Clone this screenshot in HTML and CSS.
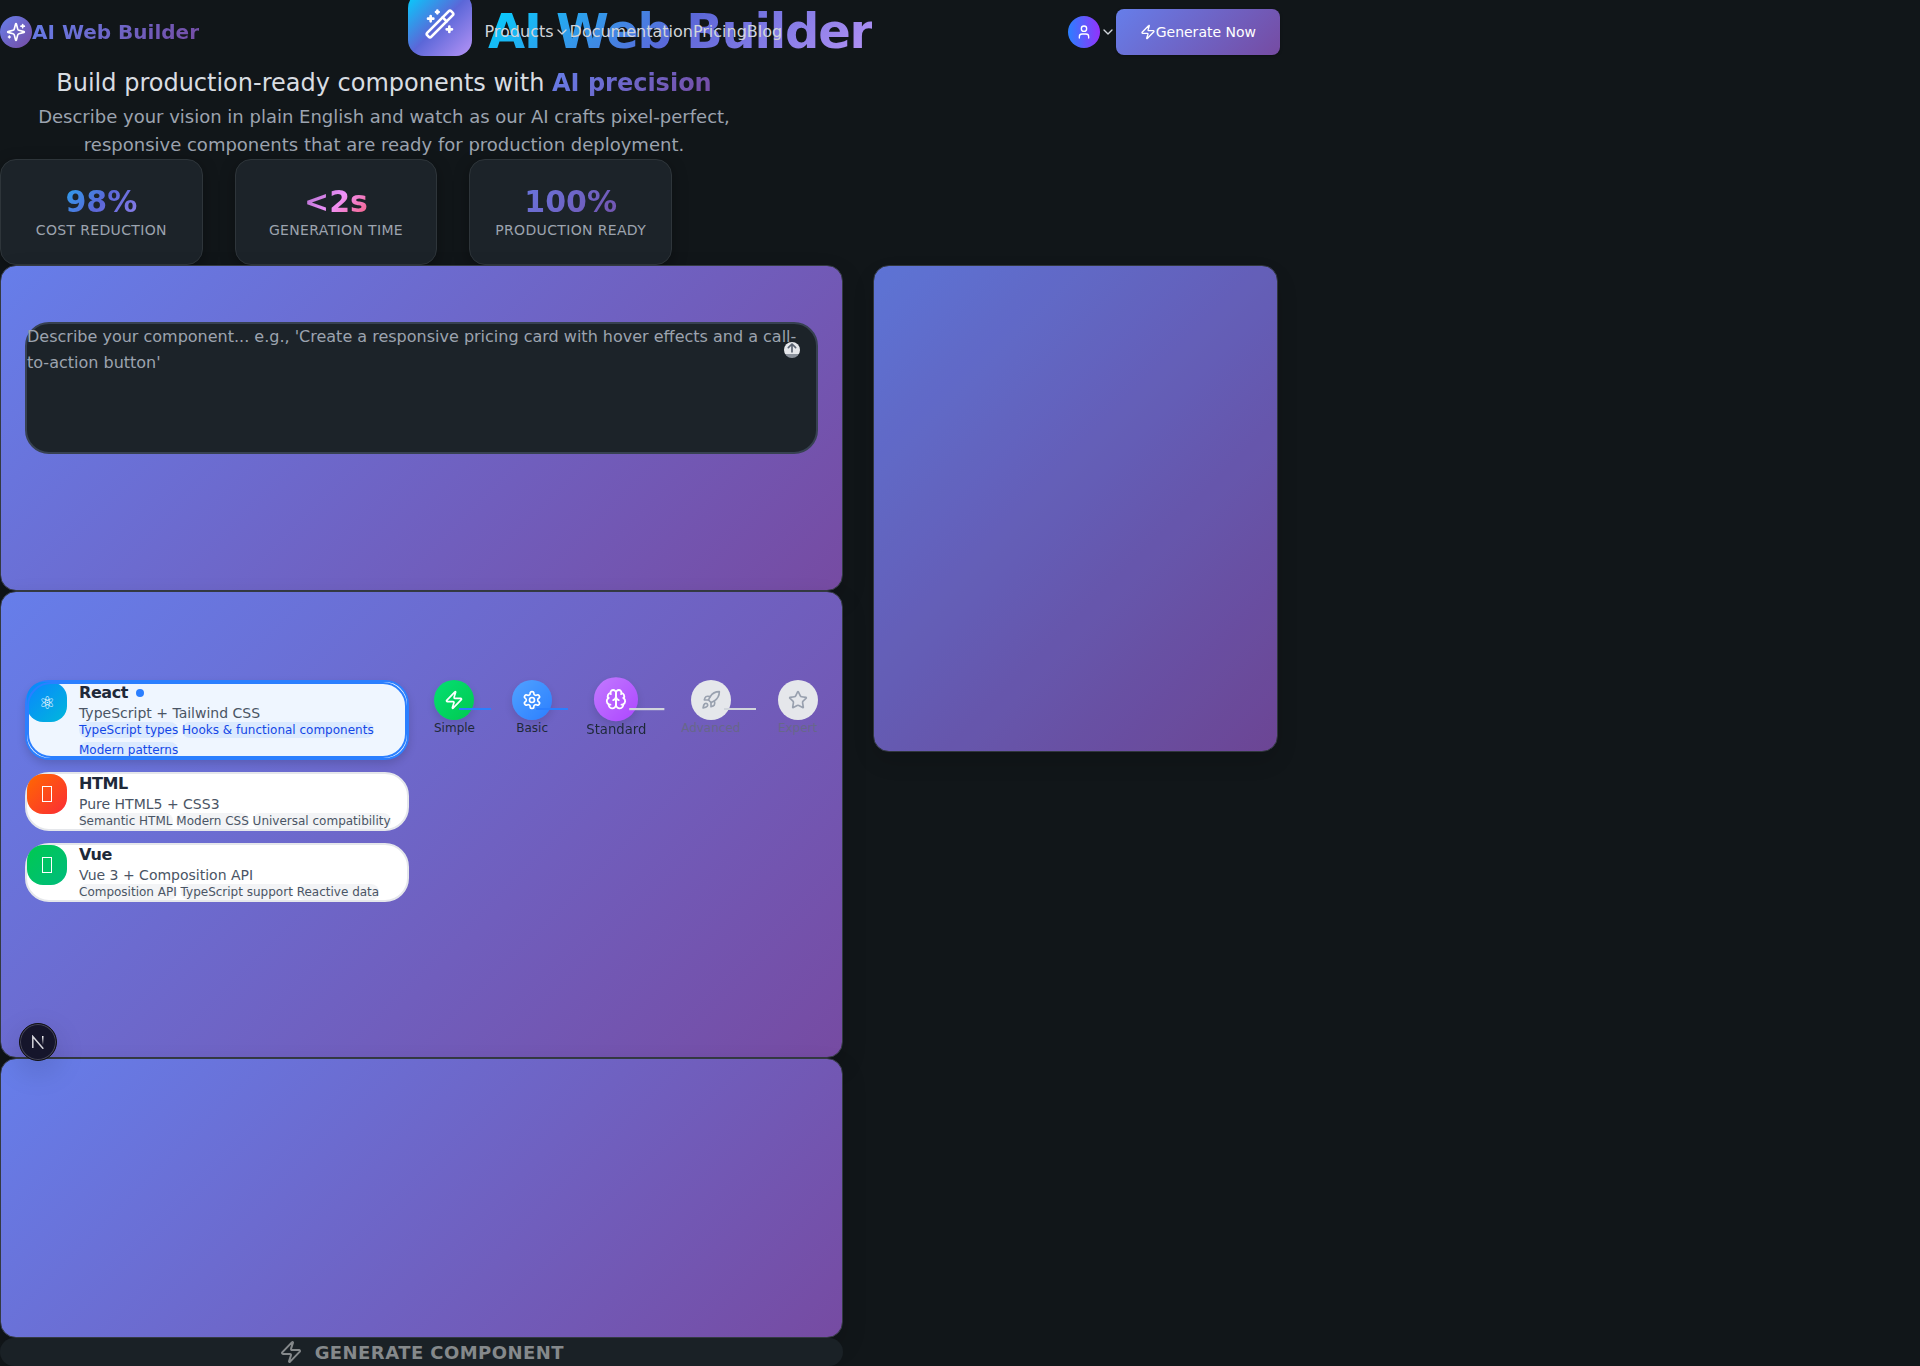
FILE: index.html
```html
<!DOCTYPE html>
<html lang="en">
<head>
<meta charset="utf-8">
<title>AI Web Builder</title>
<link rel="stylesheet" href="styles.css">
</head>
<body>
<header class="topbar">
  <div class="brand">
    <span class="brand-mark"><svg class="icon" width="20" height="20" viewBox="0 0 24 24"><path d="M9.937 15.5A2 2 0 0 0 8.5 14.063l-6.135-1.582a.5.5 0 0 1 0-.962L8.5 9.936A2 2 0 0 0 9.937 8.5l1.582-6.135a.5.5 0 0 1 .963 0L14.063 8.5A2 2 0 0 0 15.5 9.937l6.135 1.581a.5.5 0 0 1 0 .964L15.5 14.063a2 2 0 0 0-1.437 1.437l-1.582 6.135a.5.5 0 0 1-.963 0z"/><path d="M20 3v4M22 5h-4M4 17v2M5 18H3"/></svg></span>
    <span class="brand-name">AI Web Builder</span>
  </div>
  <nav class="nav">
    <a class="nav-link">Products<svg class="icon" width="16" height="16" viewBox="0 0 24 24"><path d="m6 9 6 6 6-6"/></svg></a>
    <a class="nav-link">Documentation</a>
    <a class="nav-link">Pricing</a>
    <a class="nav-link">Blog</a>
  </nav>
  <div class="actions">
    <span class="avatar"><svg class="icon" width="16" height="16" viewBox="0 0 24 24"><path d="M19 21v-2a4 4 0 0 0-4-4H9a4 4 0 0 0-4 4v2"/><circle cx="12" cy="7" r="4"/></svg></span>
    <svg class="icon" width="16" height="16" viewBox="0 0 24 24"><path d="m6 9 6 6 6-6"/></svg>
    <button class="cta"><svg class="icon" width="16" height="16" viewBox="0 0 24 24"><path d="M4 14a1 1 0 0 1-.78-1.63l9.9-10.2a.5.5 0 0 1 .86.46l-1.92 6.02A1 1 0 0 0 13 10h7a1 1 0 0 1 .78 1.63l-9.9 10.2a.5.5 0 0 1-.86-.46l1.92-6.02A1 1 0 0 0 11 14z"/></svg>Generate Now</button>
  </div>
</header>
<main class="page">
  <section class="hero">
    <div class="hero-head">
      <span class="hero-mark"><svg class="icon" width="32" height="32" viewBox="0 0 24 24"><path d="m21.64 3.64-1.28-1.28a1.21 1.21 0 0 0-1.72 0L2.36 18.64a1.21 1.21 0 0 0 0 1.72l1.28 1.28a1.2 1.2 0 0 0 1.72 0L21.64 5.36a1.2 1.2 0 0 0 0-1.72"/><path d="m14 7 3 3M5 6v4M19 14v4M10 2v2M7 8H3M21 16h-4M11 3H9"/></svg></span>
      <h1 class="hero-title">AI Web Builder</h1>
    </div>
    <p class="hero-sub">Build production-ready components with <strong class="brand-text">AI precision</strong></p>
    <p class="hero-desc">Describe your vision in plain English and watch as our AI crafts pixel-perfect, responsive components that are ready for production deployment.</p>
    <div class="stats">
      <div class="stat"><div class="stat-value cool">98%</div><div class="stat-label">Cost Reduction</div></div>
      <div class="stat"><div class="stat-value warm">&lt;2s</div><div class="stat-label">Generation Time</div></div>
      <div class="stat"><div class="stat-value brandy">100%</div><div class="stat-label">Production Ready</div></div>
    </div>
  </section>
  <div class="workspace">
    <div class="builder">
      <section class="panel panel-prompt">
        <div class="prompt">Describe your component... e.g., 'Create a responsive pricing card with hover effects and a call-to-action button'
          <span class="upload"><svg class="icon" width="16" height="16" viewBox="0 0 24 24"><path d="M12 15V3M6.500 8.500 12 3 17.500 8.500"/></svg></span>
        </div>
      </section>
      <section class="panel panel-options">
        <div class="frameworks">
          <article class="fw selected">
            <span class="fw-icon react">⚛</span>
            <div class="fw-body">
              <h3 class="fw-name">React<i class="dot"></i></h3>
              <p class="fw-sub">TypeScript + Tailwind CSS</p>
              <div class="tags"><span>TypeScript types</span> <span>Hooks &amp; functional components</span> <span>Modern patterns</span></div>
            </div>
          </article>
          <article class="fw">
            <span class="fw-icon html"><i class="tofu"></i></span>
            <div class="fw-body">
              <h3 class="fw-name">HTML</h3>
              <p class="fw-sub">Pure HTML5 + CSS3</p>
              <div class="tags"><span>Semantic HTML</span> <span>Modern CSS</span> <span>Universal compatibility</span></div>
            </div>
          </article>
          <article class="fw">
            <span class="fw-icon vue"><i class="tofu"></i></span>
            <div class="fw-body">
              <h3 class="fw-name">Vue</h3>
              <p class="fw-sub">Vue 3 + Composition API</p>
              <div class="tags"><span>Composition API</span> <span>TypeScript support</span> <span>Reactive data</span></div>
            </div>
          </article>
        </div>
        <div class="steps">
          <div class="step done"><span class="step-dot green"><svg class="icon" width="20" height="20" viewBox="0 0 24 24"><path d="M4 14a1 1 0 0 1-.78-1.63l9.9-10.2a.5.5 0 0 1 .86.46l-1.92 6.02A1 1 0 0 0 13 10h7a1 1 0 0 1 .78 1.63l-9.9 10.2a.5.5 0 0 1-.86-.46l1.92-6.02A1 1 0 0 0 11 14z"/></svg></span><span class="step-label">Simple</span></div>
          <div class="step done"><span class="step-dot blue"><svg class="icon" width="20" height="20" viewBox="0 0 24 24"><path d="M12.220 2h-.44a2 2 0 0 0-2 2v.18a2 2 0 0 1-1 1.730l-.43.25a2 2 0 0 1-2 0l-.15-.08a2 2 0 0 0-2.730.73l-.22.38a2 2 0 0 0 .73 2.730l.15.1a2 2 0 0 1 1 1.720v.51a2 2 0 0 1-1 1.740l-.15.09a2 2 0 0 0-.73 2.730l.22.38a2 2 0 0 0 2.730.73l.15-.08a2 2 0 0 1 2 0l.43.25a2 2 0 0 1 1 1.730V20a2 2 0 0 0 2 2h.44a2 2 0 0 0 2-2v-.18a2 2 0 0 1 1-1.730l.43-.25a2 2 0 0 1 2 0l.15.08a2 2 0 0 0 2.730-.73l.22-.39a2 2 0 0 0-.73-2.730l-.15-.08a2 2 0 0 1-1-1.740v-.5a2 2 0 0 1 1-1.740l.15-.09a2 2 0 0 0 .73-2.730l-.22-.38a2 2 0 0 0-2.730-.73l-.15.08a2 2 0 0 1-2 0l-.43-.25a2 2 0 0 1-1-1.730V4a2 2 0 0 0-2-2z"/><circle cx="12" cy="12" r="3"/></svg></span><span class="step-label">Basic</span></div>
          <div class="step current"><span class="step-dot violet"><svg class="icon" width="20" height="20" viewBox="0 0 24 24"><path d="M12 5a3 3 0 1 0-5.997.125 4 4 0 0 0-2.526 5.770 4 4 0 0 0 .556 6.588A4 4 0 1 0 12 18Z"/><path d="M12 5a3 3 0 1 1 5.997.125 4 4 0 0 1 2.526 5.770 4 4 0 0 1-.556 6.588A4 4 0 1 1 12 18Z"/><path d="M15 13a4.500 4.500 0 0 1-3-4 4.500 4.500 0 0 1-3 4M17.599 6.500a3 3 0 0 0 .399-1.375M6.003 5.125A3 3 0 0 0 6.401 6.500M3.477 10.896a4 4 0 0 1 .585-.396M19.938 10.500a4 4 0 0 1 .585.396M6 18a4 4 0 0 1-1.967-.516M19.967 17.484A4 4 0 0 1 18 18"/></svg></span><span class="step-label">Standard</span></div>
          <div class="step locked"><span class="step-dot"><svg class="icon" width="20" height="20" viewBox="0 0 24 24"><path d="M4.500 16.500c-1.500 1.260-2 5-2 5s3.740-.5 5-2c.71-.84.7-2.130-.09-2.910a2.180 2.180 0 0 0-2.910-.09zM12 15l-3-3a22 22 0 0 1 2-3.950A12.880 12.880 0 0 1 22 2c0 2.720-.78 7.500-6 11a22.350 22.350 0 0 1-4 2z"/><path d="M9 12H4s.55-3.030 2-4c1.620-1.080 5 0 5 0M12 15v5s3.030-.55 4-2c1.080-1.620 0-5 0-5"/></svg></span><span class="step-label">Advanced</span></div>
          <div class="step locked"><span class="step-dot"><svg class="icon" width="20" height="20" viewBox="0 0 24 24"><path d="M11.525 2.295a.53.53 0 0 1 .95 0l2.310 4.679a2.123 2.123 0 0 0 1.595 1.160l5.166.756a.53.53 0 0 1 .294.904l-3.736 3.638a2.123 2.123 0 0 0-.611 1.878l.882 5.140a.53.53 0 0 1-.771.560l-4.618-2.428a2.122 2.122 0 0 0-1.973 0L6.396 21.010a.53.53 0 0 1-.770-.560l.881-5.139a2.122 2.122 0 0 0-.611-1.879L2.160 9.795a.53.53 0 0 1 .294-.906l5.165-.755a2.122 2.122 0 0 0 1.597-1.160z"/></svg></span><span class="step-label">Expert</span></div>
        </div>
      </section>
      <section class="panel panel-extra"></section>
      <button class="generate"><svg class="icon" width="24" height="24" viewBox="0 0 24 24"><path d="M4 14a1 1 0 0 1-.78-1.63l9.9-10.2a.5.5 0 0 1 .86.46l-1.92 6.02A1 1 0 0 0 13 10h7a1 1 0 0 1 .78 1.63l-9.9 10.2a.5.5 0 0 1-.86-.46l1.92-6.02A1 1 0 0 0 11 14z"/></svg>Generate Component</button>
    </div>
    <aside class="panel preview"></aside>
  </div>
</main>
<div class="dev-badge"><svg width="14" height="14" viewBox="0 0 14 14"><defs><linearGradient id="n1" x1="0" y1="0" x2="0" y2="1"><stop offset="0" stop-color="#fff"/><stop offset="1" stop-color="#fff" stop-opacity="0"/></linearGradient></defs><path d="M1.800 13V1.500L12.300 13.800" fill="none" stroke="#d4d4da" stroke-width="1.500"/><rect x="11" y="1" width="1.500" height="9" fill="url(#n1)"/></svg></div>
</body>
</html>
```
FILE: styles.css
```css
* { box-sizing: border-box; margin: 0; padding: 0; }
html, body { height: 1366px; overflow: hidden; }
body { position: relative; background: #111619; color: #d1d5db; font: 16px/1.5 "DejaVu Sans", sans-serif; }
button { border: 0; font: inherit; }
.icon { display: block; flex: none; fill: none; stroke: currentColor; stroke-width: 2; stroke-linecap: round; stroke-linejoin: round; }

.topbar { position: absolute; top: 0; left: 0; z-index: 10; width: 1280px; height: 64px; display: flex; align-items: center; justify-content: space-between; }
.brand, .nav, .nav-link, .actions { display: flex; align-items: center; }
.brand-mark, .avatar { width: 32px; height: 32px; border-radius: 50%; display: flex; align-items: center; justify-content: center; color: #fff; background: linear-gradient(135deg, #667eea, #764ba2); }
.avatar { background: linear-gradient(90deg, #2b7fff, #9333fb); }
.brand-name, .brand-text { color: transparent; background: linear-gradient(135deg, #667eea, #764ba2); -webkit-background-clip: text; background-clip: text; }
.brand-name { font-size: 20px; font-weight: 700; line-height: 28px; }
.nav-link { color: #d1d5db; }
.cta { display: flex; align-items: center; height: 46px; padding: 0 24px; border-radius: 8px; color: #fff; font-size: 14px; background: linear-gradient(135deg, #667eea, #764ba2); box-shadow: 0 1px 3px rgba(0,0,0,.3); }

.page { width: 1280px; }
.hero { height: 265px; }
.hero-head { display: flex; align-items: center; justify-content: center; gap: 16px; height: 62px; }
.hero-mark { width: 64px; height: 64px; margin-top: -14px; border-radius: 16px; display: flex; align-items: center; justify-content: center; color: #fff; background: linear-gradient(135deg, #00d4ff, #5b67d8 50%, #b794f6); }
.hero-title { font-size: 48px; line-height: 62px; letter-spacing: -1.200px; color: transparent; background: linear-gradient(135deg, #00d4ff, #5b67d8 50%, #b794f6); -webkit-background-clip: text; background-clip: text; }
.hero-sub { width: 768px; height: 41px; font-size: 24px; line-height: 43px; text-align: center; color: #d9dde2; }
.hero-desc { width: 768px; height: 56px; padding: 0 32px; font-size: 18px; line-height: 28px; text-align: center; color: #9ca3af; }
.stats { width: 672px; display: grid; grid-template-columns: repeat(3, 1fr); gap: 32px; }
.stat { height: 106px; padding-top: 22px; border: 1px solid #2e353a; border-radius: 16px; background: #1c2329; text-align: center; box-shadow: 0 4px 16px rgba(0,0,0,.3); }
.stat-value { margin: 0 24px -1px; font-size: 30px; line-height: 40px; font-weight: 700; color: transparent; -webkit-background-clip: text; background-clip: text; }
.cool { background-image: linear-gradient(135deg, #00d4ff, #5b67d8 50%, #b794f6); }
.warm { background-image: linear-gradient(135deg, #764ba2 10%, #f093fb 50%, #f5576c 78%); }
.brandy { background-image: linear-gradient(135deg, #667eea, #764ba2); }
.stat-label { font-size: 14px; line-height: 18px; text-transform: uppercase; letter-spacing: .35px; color: #9ca3af; white-space: nowrap; }

.workspace { display: grid; grid-template-columns: 842.670px 404.500px; gap: 30.600px; align-items: start; }
.panel { border: 1px solid #343a42; border-radius: 16px; background: linear-gradient(135deg, #667eea, #764ba2); box-shadow: 0 10px 24px rgba(0,0,0,.15); padding: 0 24px; }
.panel-prompt { height: 326px; padding-top: 56px; }
.prompt { position: relative; height: 132px; border: 2px solid #374151; border-radius: 24px; background: #1c2329; color: #9ca3af; line-height: 26px; }
.upload { position: absolute; top: 18px; right: 16px; width: 16px; height: 16px; border-radius: 50%; background: linear-gradient(#e5e7eb 78%, #8b929c 78%); color: #5b6472; }
.upload .icon { stroke-width: 2.500; }
.panel-options { height: 467px; padding-top: 88px; display: grid; grid-template-columns: 384px 383.670px; gap: 25px; align-items: start; }
.frameworks { display: grid; gap: 12px; }
.fw { position: relative; display: flex; gap: 12px; border: 2px solid #e5e7eb; border-radius: 24px; background: #fff; }
.fw.selected { border-color: #2b7fff; background: #eff6ff; box-shadow: 0 4px 8px rgba(0,0,0,.15); }
.fw.selected::after { content: ""; position: absolute; inset: 0; border: 2px solid #2b7fff; border-radius: 24px; }
.fw-icon { flex: none; width: 40px; height: 40px; border-radius: 16px; display: flex; align-items: center; justify-content: center; color: #fff; font-size: 18px; }
.react { background: linear-gradient(135deg, #0a84ff, #00b8db); }
.html { background: linear-gradient(135deg, #ff6900, #fb2c36); }
.vue { background: linear-gradient(135deg, #00c950, #00bc7d); }
.tofu { width: 10px; height: 16px; border: 1px solid #fff; }
.fw-name { display: flex; align-items: center; gap: 8px; font-size: 16px; line-height: 20px; letter-spacing: -.400px; color: #1e2939; }
.selected .fw-name { line-height: 21px; }
.dot { width: 8px; height: 8px; border-radius: 50%; background: #2b7fff; }
.fw-sub { font-size: 14px; line-height: 20px; color: #4a5565; }
.tags { margin: -2.600px 0 -2.400px; font-size: 12px; line-height: 20px; color: #4a5565; }
.tags span { border-radius: 8px; background: #f3f4f6; padding: 1px 0; }
.selected .tags { color: #1447e6; }
.selected .tags span { background: #dbeafe; }

.steps { display: flex; justify-content: space-between; }
.step { position: relative; display: flex; flex-direction: column; align-items: center; color: #1e2939; }
.step-dot { width: 40px; height: 40px; border-radius: 50%; display: flex; align-items: center; justify-content: center; color: #fff; box-shadow: 0 4px 8px rgba(0,0,0,.12); }
.green { background: linear-gradient(135deg, #05df72, #00c950); }
.blue { background: linear-gradient(135deg, #51a2ff, #2b7fff); }
.violet { background: linear-gradient(135deg, #c27aff, #ad46ff); }
.step-label { font-size: 12px; line-height: 16px; }
.step:not(:last-child)::after { content: ""; position: absolute; top: 28px; left: calc(100% - 16px); width: 32px; height: 2px; background: #d1d5dc; }
.step.done::after { background: #2b7fff; }
.current { transform: scale(1.1); }
.locked .step-dot { background: #e5e7eb; color: #99a1af; box-shadow: none; }
.locked .step-label { color: #67678a; }

.panel-extra { height: 280px; }
.generate { width: 100%; height: 28px; display: flex; align-items: center; justify-content: center; gap: 12px; border-radius: 16px; background: #1a2126; color: #85898b; font-size: 18px; font-weight: 700; letter-spacing: .450px; text-transform: uppercase; }
.preview { height: 487px; opacity: .9; }
.dev-badge { position: absolute; left: 19px; top: 1023px; z-index: 20; width: 38px; height: 38px; border-radius: 50%; display: flex; align-items: center; justify-content: center; background: #15152b; border: 1px solid #111; box-shadow: inset 0 0 0 1px #46465a, 0 10px 30px rgba(0,0,0,.15); }
```
